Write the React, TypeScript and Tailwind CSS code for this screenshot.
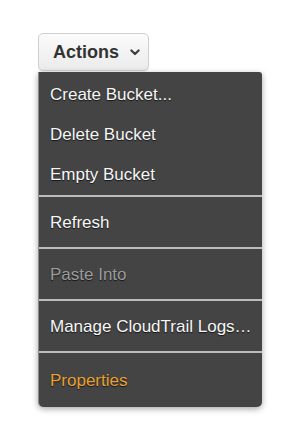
import React from 'react';

type Item = { label: string; tone?: 'normal' | 'disabled' | 'accent' };

const groups: Item[][] = [
  [{ label: 'Create Bucket...' }, { label: 'Delete Bucket' }, { label: 'Empty Bucket' }],
  [{ label: 'Refresh' }],
  [{ label: 'Paste Into', tone: 'disabled' }],
  [{ label: 'Manage CloudTrail Logs…' }],
  [{ label: 'Properties', tone: 'accent' }],
];

function Chevron() {
  return (
    <svg width="10" height="7" viewBox="0 0 10 7" className="ml-[11px] mt-[1px]">
      <path d="M1.4 1.5 L5 5 L8.6 1.5" fill="none" stroke="#3c3c3c" strokeWidth="2.2" strokeLinecap="round" strokeLinejoin="round" />
    </svg>
  );
}

export default function App() {
  return (
    <div className="w-[300px] h-[424px] bg-white pl-[38px] pt-[33px] font-['Liberation_Sans','Helvetica_Neue',Arial,sans-serif]">
      <button className="flex items-center w-[111px] h-[38px] pl-[14px] rounded-[5px] border border-[#cfcfcf] bg-gradient-to-b from-[#fbfbfb] to-[#ebebeb] shadow-[0_1px_1px_rgba(0,0,0,0.06)]">
        <span className="text-[18px] font-bold text-[#333] leading-none">Actions</span>
        <Chevron />
      </button>

      <div className="mt-px w-[224px] bg-[#444444] border-l border-[#8a8a8a] rounded-b-[5px] rounded-tr-[3px] shadow-[0_2px_6px_rgba(0,0,0,0.35)] overflow-hidden">
        {groups.map((group, gi) => (
          <div key={gi}>
            {gi > 0 && <div className="h-[2px] bg-[#bcbcbc]" />}
            <div className={gi === 0 ? 'pt-[2px] pb-px' : gi === groups.length - 1 ? 'h-[54px] flex flex-col justify-center pt-px' : 'h-[50px] flex flex-col justify-center'}>
              {group.map((item) => (
                <div
                  key={item.label}
                  className={
                    'flex items-center pl-[11px] text-[17px] leading-none [text-shadow:0_1px_1px_rgba(0,0,0,0.7)] ' +
                    (gi === 0 ? 'h-10 ' : '') +
                    (item.tone === 'disabled'
                      ? 'text-[#9c9c9c]'
                      : item.tone === 'accent'
                      ? 'text-[#eaa032]'
                      : 'text-[#f7f7f7]')
                  }
                >
                  {item.label}
                </div>
              ))}
            </div>
          </div>
        ))}
      </div>
    </div>
  );
}
